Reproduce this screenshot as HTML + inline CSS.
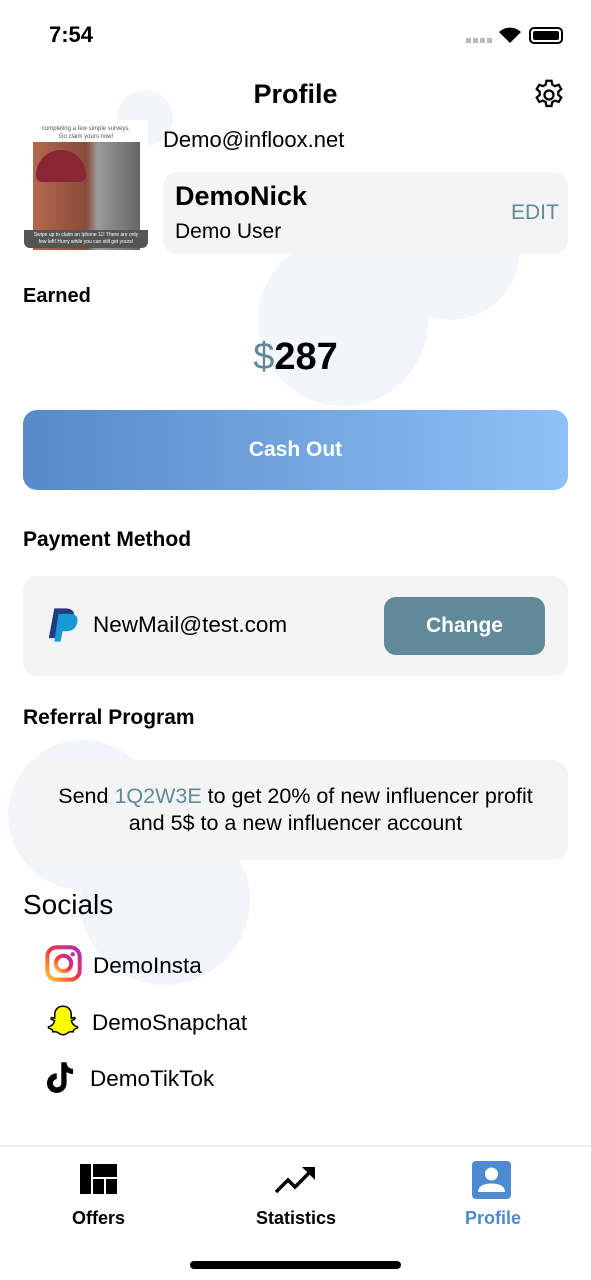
<!DOCTYPE html>
<html><head><meta charset="utf-8"><style>
*{margin:0;padding:0;box-sizing:border-box}
body{width:591px;height:1280px;background:#fff;font-family:"Liberation Sans",Roboto,sans-serif;color:#000;position:relative;overflow:hidden}
.a{position:absolute}
.c{position:absolute;border-radius:50%;background:#f2f6fb}
.card{position:absolute;background:#f4f4f4;border-radius:14px}
</style></head><body>
<div class="c" style="left:117px;top:90px;width:56px;height:56px"></div>
<div class="c" style="left:380px;top:180px;width:140px;height:140px"></div>
<div class="c" style="left:258px;top:236px;width:170px;height:170px"></div>
<div class="c" style="left:8px;top:740px;width:150px;height:150px"></div>
<div class="c" style="left:80px;top:815px;width:170px;height:170px"></div>

<div class="a" style="left:49px;top:22px;font-size:22px;font-weight:bold">7:54</div>
<div class="a" style="left:466px;top:38px;width:26px;height:5px;background:repeating-linear-gradient(90deg,#bbb 0 5px,transparent 5px 7px)"></div>
<svg class="a" style="left:498px;top:26px" width="24" height="18" viewBox="0 0 24 18"><path d="M12 17L1 6a16 16 0 0 1 22 0z" fill="#000"/></svg>
<div class="a" style="left:529px;top:27px;width:34px;height:17px;border:2px solid #000;border-radius:5px;padding:2px"><div style="width:100%;height:100%;background:#000;border-radius:2px"></div></div>

<div class="a" style="left:0;width:591px;top:79px;text-align:center;font-size:27px;font-weight:bold">Profile</div>
<svg class="a" style="left:531px;top:77px" width="36" height="36" viewBox="0 0 24 24" fill="none" stroke="#000" stroke-width="1.5"><circle cx="12" cy="12" r="3"/><path d="M10.3 2.5h3.4l.5 2.6 1.8 1 2.5-.9 1.7 2.9-2 1.7v2.2l2 1.7-1.7 2.9-2.5-.9-1.8 1-.5 2.6h-3.4l-.5-2.6-1.8-1-2.5.9-1.7-2.9 2-1.7v-2.2l-2-1.7 1.7-2.9 2.5.9 1.8-1z"/></svg>

<div class="a" style="left:24px;top:120px;width:124px;height:130px;background:#fff">
<div style="font-size:6px;color:#555;text-align:center;margin-top:5px;line-height:8px">completing a few simple surveys.<br>Go claim yours now!</div>
<div style="position:absolute;left:9px;top:22px;width:107px;height:108px;background:linear-gradient(90deg,#b4684e 0,#8a4a3a 50%,#9a9a9a 60%,#666 100%)"></div>
<div style="position:absolute;left:12px;top:30px;width:50px;height:32px;background:#8a2633;border-radius:25px 25px 6px 6px"></div>
<div style="position:absolute;left:0;top:110px;width:124px;height:18px;background:#555;color:#fff;font-size:5px;text-align:center;line-height:7px;padding-top:2px;border-radius:0 0 6px 6px">Swipe up to claim an Iphone 11! There are only<br>few left! Hurry while you can still get yours!</div>
</div>
<div class="a" style="left:163px;top:127px;font-size:22px">Demo@infloox.net</div>
<div class="card" style="left:163px;top:172px;width:405px;height:82px"></div>
<div class="a" style="left:175px;top:181px;font-size:27px;font-weight:bold">DemoNick</div>
<div class="a" style="left:175px;top:220px;font-size:21px">Demo User</div>
<div class="a" style="left:511px;top:201px;font-size:21px;color:#62899a">EDIT</div>

<div class="a" style="left:23px;top:285px;font-size:20px;font-weight:bold">Earned</div>
<div class="a" style="left:0;width:591px;top:336px;text-align:center;font-size:38px;font-weight:bold"><span style="color:#62899a;font-weight:normal">$</span>287</div>
<div class="a" style="left:23px;top:410px;width:545px;height:80px;border-radius:14px;background:linear-gradient(90deg,#5689c8,#8fc0f7);color:#fff;font-size:21px;font-weight:bold;text-align:center;line-height:80px">Cash Out</div>

<div class="a" style="left:23px;top:528px;font-size:21px;font-weight:bold">Payment Method</div>
<div class="card" style="left:23px;top:576px;width:545px;height:100px"></div>
<svg class="a" style="left:47px;top:607px" width="34" height="36" viewBox="0 0 24 26"><path d="M5 1h8c5 0 7 2.5 6 6.5-1 4.5-4 6-8 6H8l-1.7 9H1z" fill="#253b80"/><path d="M8 5h8c5 0 6.5 2.5 5.5 6.5-1 4.5-4 6-8 6h-2.5L9.5 25H5z" fill="#179bd7"/></svg>
<div class="a" style="left:93px;top:612px;font-size:22.5px">NewMail@test.com</div>
<div class="a" style="left:384px;top:597px;width:161px;height:58px;border-radius:12px;background:#62899a;color:#fff;font-size:21px;font-weight:bold;text-align:center;line-height:58px">Change</div>

<div class="a" style="left:23px;top:706px;font-size:21px;font-weight:bold">Referral Program</div>
<div class="card" style="left:23px;top:760px;width:545px;height:100px;text-align:center;font-size:21.5px;line-height:27px;padding-top:23px">Send <span style="color:#62899a">1Q2W3E</span> to get 20% of new influencer profit<br>and 5$ to a new influencer account</div>

<div class="a" style="left:23px;top:889px;font-size:28px">Socials</div>
<svg class="a" style="left:45px;top:945px" width="37" height="37" viewBox="0 0 24 24"><defs><linearGradient id="ig" x1="0" y1="1" x2="1" y2="0"><stop offset="0" stop-color="#fdc830"/><stop offset=".5" stop-color="#f5333f"/><stop offset="1" stop-color="#b02cbf"/></linearGradient></defs><rect x="1.5" y="1.5" width="21" height="21" rx="6" fill="none" stroke="url(#ig)" stroke-width="2.6"/><circle cx="12" cy="12" r="5" fill="none" stroke="url(#ig)" stroke-width="2.6"/><circle cx="18" cy="6" r="1.4" fill="#c2318f"/></svg>
<div class="a" style="left:93px;top:953px;font-size:22.5px">DemoInsta</div>
<svg class="a" style="left:45px;top:1004px" width="36" height="36" viewBox="0 0 24 24"><path d="M12 1.5c3.5 0 5.5 2.5 5.5 5.5v2.5l1.8-.5c.8 0 1 .8.3 1.2l-2 1c.5 2 2 3.5 4 4 .4.3.2.8-.3 1-1 .4-2 .4-2.3 1.4l-.3 1c-1-.2-2.2-.3-3.2.4-1 .7-2 1.5-3.5 1.5s-2.5-.8-3.5-1.5c-1-.7-2.2-.6-3.2-.4l-.3-1c-.3-1-1.3-1-2.3-1.4-.5-.2-.7-.7-.3-1 2-.5 3.5-2 4-4l-2-1c-.7-.4-.5-1.2.3-1.2l1.8.5V7c0-3 2-5.5 5.5-5.5z" fill="#fffc00" stroke="#000" stroke-width="1"/></svg>
<div class="a" style="left:92px;top:1010px;font-size:22.5px">DemoSnapchat</div>
<svg class="a" style="left:44px;top:1061px" width="32" height="34" viewBox="0 0 24 26"><path d="M13 1h4c0 3 2 5 5 5v4c-2 0-3.5-.6-5-1.6V17a7.5 7.5 0 1 1-7.5-7.5v4.3A3.2 3.2 0 1 0 13 17z" fill="#000"/></svg>
<div class="a" style="left:90px;top:1066px;font-size:22.5px">DemoTikTok</div>

<div class="a" style="left:0;top:1145px;width:591px;height:2px;background:#eee"></div>
<svg class="a" style="left:80px;top:1164px" width="37" height="30" viewBox="0 0 37 30"><rect x="0" y="0" width="11" height="30"/><rect x="13" y="0" width="24" height="13"/><rect x="13" y="15" width="11" height="15"/><rect x="26" y="15" width="11" height="15"/></svg>
<div class="a" style="left:72px;top:1208px;font-size:18px;font-weight:bold">Offers</div>
<svg class="a" style="left:274px;top:1166px" width="42" height="28" viewBox="0 0 42 28"><path d="M2 26l12-12 7 7 15-15" fill="none" stroke="#000" stroke-width="3.5"/><path d="M28 1h13v13z" fill="#000"/></svg>
<div class="a" style="left:256px;top:1208px;font-size:18px;font-weight:bold">Statistics</div>
<svg class="a" style="left:472px;top:1161px" width="39" height="38" viewBox="0 0 39 38"><rect width="39" height="38" rx="4" fill="#4d8ad0"/><circle cx="19.5" cy="13" r="6.5" fill="#fff"/><path d="M6 31c0-7 8-8.5 13.5-8.5S33 24 33 31z" fill="#fff"/></svg>
<div class="a" style="left:465px;top:1208px;font-size:18px;font-weight:bold;color:#4d8ad0">Profile</div>
<div class="a" style="left:190px;top:1261px;width:211px;height:8px;border-radius:4px;background:#000"></div>
</body></html>
